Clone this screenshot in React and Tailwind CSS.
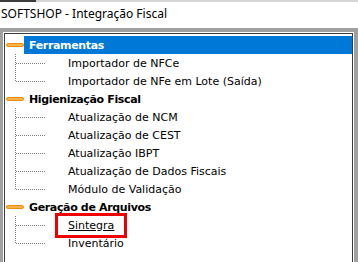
import React from 'react';

const groups = [
  {
    title: 'Ferramentas',
    selected: true,
    items: ['Importador de NFCe', 'Importador de NFe em Lote (Saída)'],
  },
  {
    title: 'Higienização Fiscal',
    items: [
      'Atualização de NCM',
      'Atualização de CEST',
      'Atualização IBPT',
      'Atualização de Dados Fiscais',
      'Módulo de Validação',
    ],
  },
  {
    title: 'Geração de Arquivos',
    items: ['Sintegra', 'Inventário'],
  },
];

// dotted tree connector for one child row
const Connector = ({ last }) => (
  <svg width="40" height="18" className="shrink-0 block">
    <line
      x1="10.5"
      y1="0"
      x2="10.5"
      y2={last ? 9 : 18}
      stroke="#808080"
      strokeDasharray="1 1"
    />
    <line x1="11" y1="9.5" x2="40" y2="9.5" stroke="#808080" strokeDasharray="1 1" />
  </svg>
);

const Minus = () => (
  <div className="w-[19px] shrink-0 flex items-center pl-[1px]">
    <span className="block w-[18px] h-[4px] rounded-full bg-[#f9b14a] border border-[#ee8f0c]" />
  </div>
);

const Group = ({ group }) => (
  <div>
    <div className="h-[18px] flex items-stretch">
      <Minus />
      <div
        className={`flex-1 flex items-center pl-[5px] font-bold tracking-[-0.35px] ${
          group.selected ? 'bg-[#0078d7] text-white' : 'text-black'
        }`}
      >
        {group.title}
      </div>
    </div>
    {group.items.map((item, i) => (
      <div key={item} className="h-[18px] flex items-center relative">
        <Connector last={i === group.items.length - 1} />
        <span className={`ml-[23px] ${item === 'Sintegra' ? 'underline' : ''}`}>{item}</span>
        {item === 'Sintegra' && (
          <div className="absolute left-[50px] top-[-3px] w-[72px] h-[25px] border-[3px] border-[#ee0000]" />
        )}
      </div>
    ))}
  </div>
);

export default function App() {
  return (
    <div className="w-[358px] h-[262px] bg-white overflow-hidden flex flex-col">
      <div className="h-[2px] flex shrink-0">
        <div className="w-[36px] bg-[#3c3c3c]" />
        <div className="flex-1 bg-[#d4d4d4]" />
      </div>
      <div className="h-[26px] shrink-0 flex items-center pl-[1px] pb-[2px] text-[12px] text-black font-['Noto_Sans',sans-serif]">
        SOFTSHOP - Integração Fiscal
      </div>
      <div className="flex-1 bg-[#a0a0a0] pt-[4px] pl-[3px] pr-[4px] flex flex-col min-h-0">
        <div className="flex-1 border-l border-t border-r border-white flex flex-col min-h-0">
          <div className="flex-1 border-l border-t border-r border-[#3c3c3c] bg-white pt-[2px] text-[11px] text-[#000] font-['DejaVu_Sans',sans-serif] leading-none">
            {groups.map((g) => (
              <Group key={g.title} group={g} />
            ))}
          </div>
        </div>
      </div>
    </div>
  );
}
